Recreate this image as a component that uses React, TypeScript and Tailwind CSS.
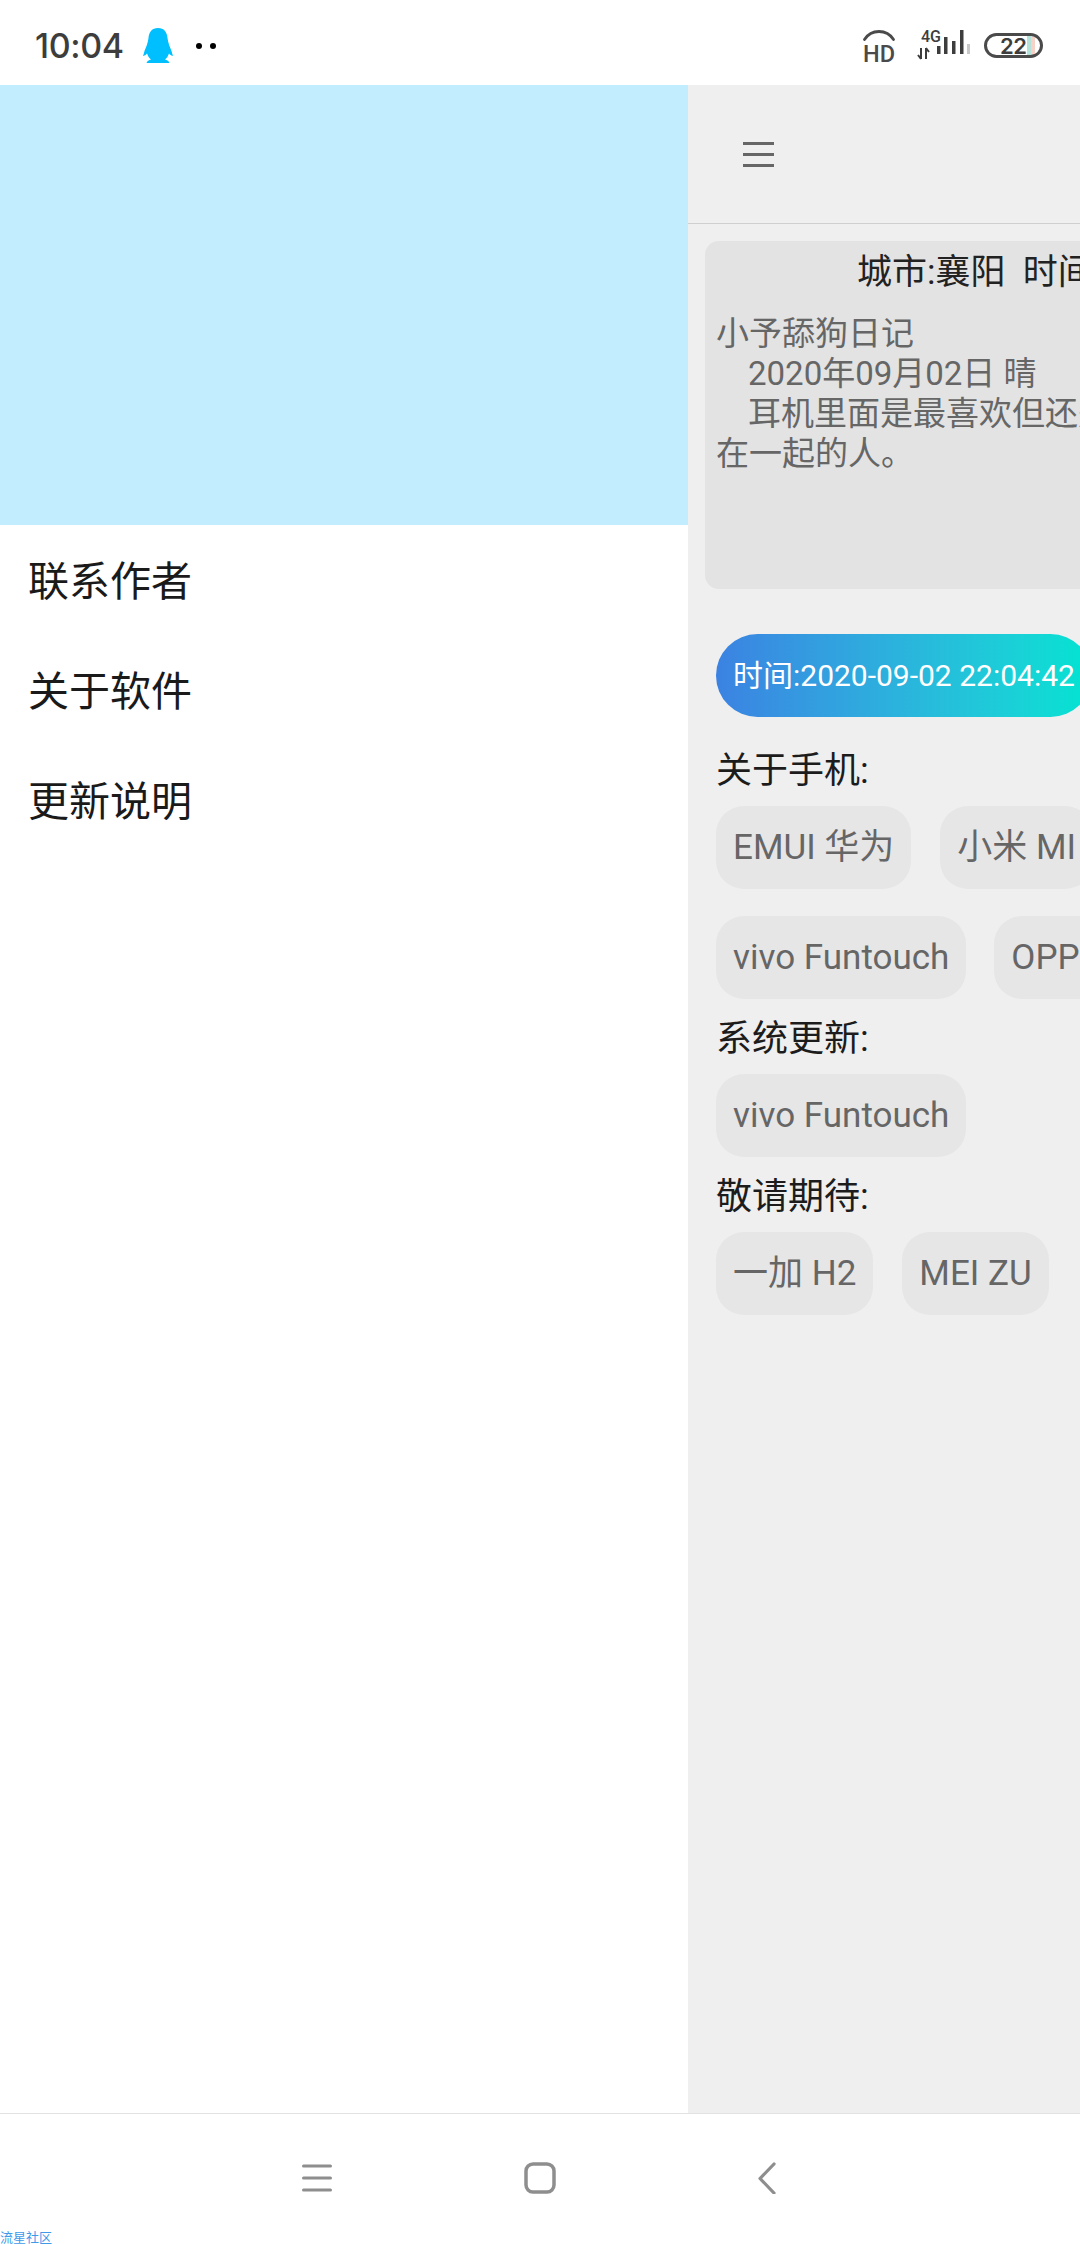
import React from "react";

const FONT = "font-['Roboto','Noto_Sans_CJK_SC',sans-serif]";

const Chip: React.FC<{ label: string }> = ({ label }) => (
  <div className="h-[83px] shrink-0 flex items-center px-[17px] pt-[2px] rounded-[28px] bg-[#e6e6e6] text-[#666666] text-[35px] whitespace-nowrap">
    {label}
  </div>
);

const SectionLabel: React.FC<{ label: string }> = ({ label }) => (
  <div className="h-[42px] flex items-center pt-[2px] text-[36px] text-[#1c1c1c] leading-none">{label}</div>
);

const StatusBar = () => (
  <div className="h-[85px] shrink-0 bg-white flex items-center justify-between pt-[6px] pl-[35px] pr-[37px]">
    <div className="flex items-center">
      <span className="text-[34px] font-medium text-[#3d3d3d] font-['Inter',sans-serif] tracking-[-0.4px]">10:04</span>
      {/* 企鹅 */}
      <svg className="ml-[19px]" width="30" height="35" viewBox="0 0 30 35">
        <path
          d="M15 0C9 0 6 4 5.500 10C5 15 3 19 1.500 23C1 25 .5 26.500 0 28C1 28 3 27 4 25.500C5 28 6 30 8 31.500C6 32 4 33 3.500 35H26.500C26 33 24 32 22 31.500C24 30 25 28 26 25.500C27 27 29 28 30 28C29.500 26.500 29 25 28.500 23C27 19 25 15 24.500 10C24 4 21 0 15 0Z"
          fill="#00bfff"
        />
      </svg>
      <div className="ml-[23px] flex gap-[8px]">
        <span className="w-[6px] h-[6px] rounded-full bg-black" />
        <span className="w-[6px] h-[6px] rounded-full bg-black" />
      </div>
    </div>
    <div className="flex items-center">
      {/* HD */}
      <svg width="32" height="32" viewBox="0 0 32 32">
        <path d="M1.500 9.500C5 4 10 1.500 16 1.500C22 1.500 27 4 30.500 9.500" fill="none" stroke="#4a4a4a" strokeWidth="2.800" strokeLinecap="round" />
        <text x="16" y="32" textAnchor="middle" fontFamily="Roboto, sans-serif" fontWeight="500" fontSize="23.500" fill="#4a4a4a">HD</text>
      </svg>
      {/* 4G 信号 */}
      <svg className="ml-[22px]" width="53" height="32" viewBox="0 0 53 32">
        <text x="4" y="12" fontFamily="Roboto, sans-serif" fontWeight="500" fontSize="16" fill="#3d3d3d">4G</text>
        <path d="M4 18V29M1 25L4 29M9 18V29M9 18L12 22" fill="none" stroke="#3d3d3d" strokeWidth="2" />
        <rect x="20" y="16" width="3.500" height="8" fill="#3d3d3d" />
        <rect x="27" y="7" width="3.500" height="17" fill="#3d3d3d" />
        <rect x="35" y="11" width="3.500" height="13" fill="#3d3d3d" />
        <rect x="43" y="0" width="3.500" height="24" fill="#3d3d3d" />
        <rect x="50" y="14" width="3" height="10" fill="#c8c8c8" />
      </svg>
      {/* 电量 */}
      <svg className="ml-[14px]" width="59" height="32" viewBox="0 0 59 32">
        <rect x="43" y="6" width="4" height="20" fill="#b5e3dc" />
        <rect x="47" y="7" width="4" height="18" fill="#f6d3c6" />
        <rect x="1.500" y="4.500" width="56" height="22" rx="11" fill="none" stroke="#4a4a4a" strokeWidth="3" />
        <text x="16" y="24" fontFamily="Inter, sans-serif" fontWeight="600" fontSize="22" letterSpacing="-0.500" fill="#3d3d3d">22</text>
      </svg>
    </div>
  </div>
);

const Drawer = () => (
  <div className="w-[688px] shrink-0 bg-white flex flex-col">
    <div className="h-[440px] bg-[#c2edff]" />
    <div className="pt-[3px]">
      {["联系作者", "关于软件", "更新说明"].map((item) => (
        <div key={item} className="h-[110px] flex items-center pl-[28px] text-[41px] text-[#1a1a1a]">
          {item}
        </div>
      ))}
    </div>
  </div>
);

const MainPanel = () => (
  <div className="flex-1 min-w-0 overflow-hidden bg-[#efefef]">
    <div className="h-[139px] border-b border-[#cfcfcf] flex flex-col justify-center pl-[55px] gap-[8px]">
      <div className="w-[31px] h-[3px] bg-[#666666]" />
      <div className="w-[31px] h-[3px] bg-[#666666]" />
      <div className="w-[31px] h-[3px] bg-[#666666]" />
    </div>

    <div className="ml-[17px] mt-[17px] w-[500px] h-[348px] rounded-[14px] bg-[#e3e3e3] pl-[11px] overflow-hidden whitespace-pre">
      <div className="pl-[141px] pt-[9px] text-[35px] leading-[46px] text-[#222222]">城市:襄阳  时间:2020-09-02</div>
      <div className="mt-[18px] text-[33px] leading-[40px] text-[#666666]">
        <div>小予舔狗日记</div>
        <div className="pl-[32px]">2020年09月02日 晴</div>
        <div className="pl-[32px]">耳机里面是最喜欢但还是不能</div>
        <div>在一起的人。</div>
      </div>
    </div>

    <div className="ml-[28px] mt-[45px] flex flex-col items-start">
      <div className="h-[83px] flex items-center px-[17px] rounded-full bg-gradient-to-r from-[#3b82e2] to-[#00e4d2] text-white text-[30px] whitespace-nowrap">
        时间:2020-09-02 22:04:42
      </div>
      <div className="mt-[32px]">
        <SectionLabel label="关于手机:" />
      </div>
      <div className="mt-[15px] flex gap-[29px]">
        <Chip label="EMUI 华为" />
        <Chip label="小米 MI" />
      </div>
      <div className="mt-[27px] flex gap-[28px]">
        <Chip label="vivo Funtouch" />
        <Chip label="OPPO" />
      </div>
      <div className="mt-[18px]">
        <SectionLabel label="系统更新:" />
      </div>
      <div className="mt-[15px]">
        <Chip label="vivo Funtouch" />
      </div>
      <div className="mt-[18px]">
        <SectionLabel label="敬请期待:" />
      </div>
      <div className="mt-[15px] flex gap-[29px]">
        <Chip label="一加 H2" />
        <Chip label="MEI ZU" />
      </div>
    </div>
  </div>
);

const NavBar = () => (
  <div className="relative h-[131px] shrink-0 bg-white border-t border-[#e2e2e2] flex items-start pt-[48px] pl-[302px]">
    <svg width="30" height="32" viewBox="0 0 30 32">
      <path d="M1.500 4H28.500M1.500 16H28.500M1.500 28H28.500" stroke="#8e8e8e" strokeWidth="3" strokeLinecap="round" />
    </svg>
    <svg className="ml-[192px]" width="32" height="32" viewBox="0 0 32 32">
      <rect x="2" y="2" width="28" height="28" rx="7" fill="none" stroke="#8e8e8e" strokeWidth="3.500" />
    </svg>
    <svg className="ml-[202px]" width="19" height="32" viewBox="0 0 19 32">
      <path d="M16 2L2 16.500L16 31" fill="none" stroke="#8e8e8e" strokeWidth="3.200" strokeLinecap="round" strokeLinejoin="round" />
    </svg>
    <span className="absolute left-0 bottom-[0px] text-[13px] leading-[13px] text-[#3f9bea]">流星社区</span>
  </div>
);

export default function App() {
  return (
    <div className={`w-[1080px] h-[2244px] flex flex-col overflow-hidden bg-white ${FONT}`}>
      <StatusBar />
      <div className="flex-1 min-h-0 flex">
        <Drawer />
        <MainPanel />
      </div>
      <NavBar />
    </div>
  );
}
